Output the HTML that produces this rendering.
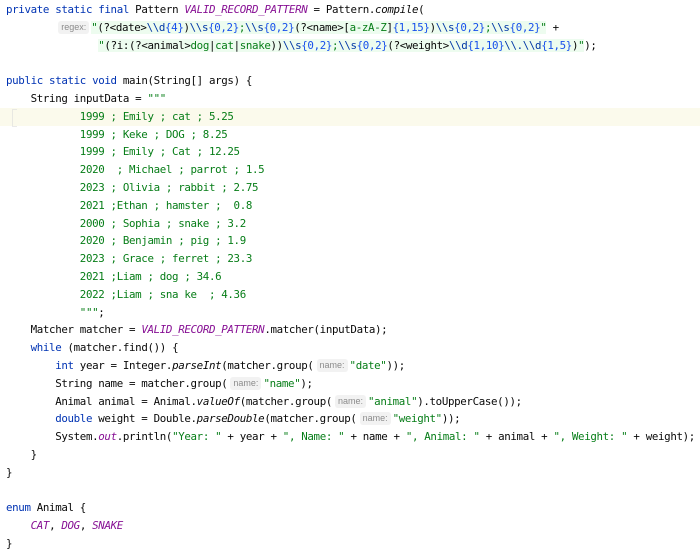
<!DOCTYPE html>
<html><head><meta charset="utf-8">
<style>
html,body{margin:0;padding:0;background:#fff;width:700px;height:554px;overflow:hidden}
pre{margin:0;position:absolute;left:6px;top:1px;font-family:"DejaVu Sans Mono","Liberation Mono",monospace;font-size:10.8px;letter-spacing:-0.35px;line-height:17.8px;color:#080808;white-space:pre}
.k{color:#0033b3}
.p{color:#871094;font-style:italic}
.i{font-style:italic}
.s{color:#067d17}
.n{color:#1750eb}
.r{background:#edfcef}
.e{color:#0037a6}
.h{display:inline-block;font-family:"Liberation Sans",sans-serif;font-size:9px;letter-spacing:0;font-style:normal;color:#8c8c8c;background:#f2f2f2;border-radius:3px;padding:0 3px;line-height:13px;margin:0 2px 0 3px;vertical-align:1px}
.hl{position:absolute;left:0;top:108px;width:700px;height:18px;background:#fbfaec}
.br{position:absolute;left:12px;top:109px;width:4px;height:16px;border-left:1px solid #ddd;border-top:1px solid #ddd;border-bottom:1px solid #ddd;opacity:.6}
</style></head><body>
<div class="hl"></div><div class="br"></div>
<pre><span class="k">private static final</span> Pattern <span class="p">VALID_RECORD_PATTERN</span> = Pattern.<span class="i">compile</span>(
        <span class="h">regex:</span><span class="r"><span class="s">"</span>(?&lt;date&gt;<span class="e">\\d</span><span class="n">{4}</span>)<span class="e">\\s</span><span class="n">{0,2}</span><span class="s">;</span><span class="e">\\s</span><span class="n">{0,2}</span>(?&lt;name&gt;[<span class="s">a-zA-Z</span>]<span class="n">{1,15}</span>)<span class="e">\\s</span><span class="n">{0,2}</span><span class="s">;</span><span class="e">\\s</span><span class="n">{0,2}</span><span class="s">"</span></span> +
               <span class="r"><span class="s">"</span>(?i:(?&lt;animal&gt;<span class="s">dog</span>|<span class="s">cat</span>|<span class="s">snake</span>))<span class="e">\\s</span><span class="n">{0,2}</span><span class="s">;</span><span class="e">\\s</span><span class="n">{0,2}</span>(?&lt;weight&gt;<span class="e">\\d</span><span class="n">{1,10}</span><span class="e">\\.\\d</span><span class="n">{1,5}</span>)<span class="s">"</span></span>);

<span class="k">public static void</span> main(String[] args) {
    String inputData = <span class="s">"""</span>
<span class="s">            1999 ; Emily ; cat ; 5.25
            1999 ; Keke ; DOG ; 8.25
            1999 ; Emily ; Cat ; 12.25
            2020  ; Michael ; parrot ; 1.5
            2023 ; Olivia ; rabbit ; 2.75
            2021 ;Ethan ; hamster ;  0.8
            2000 ; Sophia ; snake ; 3.2
            2020 ; Benjamin ; pig ; 1.9
            2023 ; Grace ; ferret ; 23.3
            2021 ;Liam ; dog ; 34.6
            2022 ;Liam ; sna ke  ; 4.36
            """</span>;
    Matcher matcher = <span class="p">VALID_RECORD_PATTERN</span>.matcher(inputData);
    <span class="k">while</span> (matcher.find()) {
        <span class="k">int</span> year = Integer.<span class="i">parseInt</span>(matcher.group(<span class="h">name:</span><span class="s">"date"</span>));
        String name = matcher.group(<span class="h">name:</span><span class="s">"name"</span>);
        Animal animal = Animal.<span class="i">valueOf</span>(matcher.group(<span class="h">name:</span><span class="s">"animal"</span>).toUpperCase());
        <span class="k">double</span> weight = Double.<span class="i">parseDouble</span>(matcher.group(<span class="h">name:</span><span class="s">"weight"</span>));
        System.<span class="p">out</span>.println(<span class="s">"Year: "</span> + year + <span class="s">", Name: "</span> + name + <span class="s">", Animal: "</span> + animal + <span class="s">", Weight: "</span> + weight);
    }
}

<span class="k">enum</span> Animal {
    <span class="p">CAT</span>, <span class="p">DOG</span>, <span class="p">SNAKE</span>
}</pre>
</body></html>
